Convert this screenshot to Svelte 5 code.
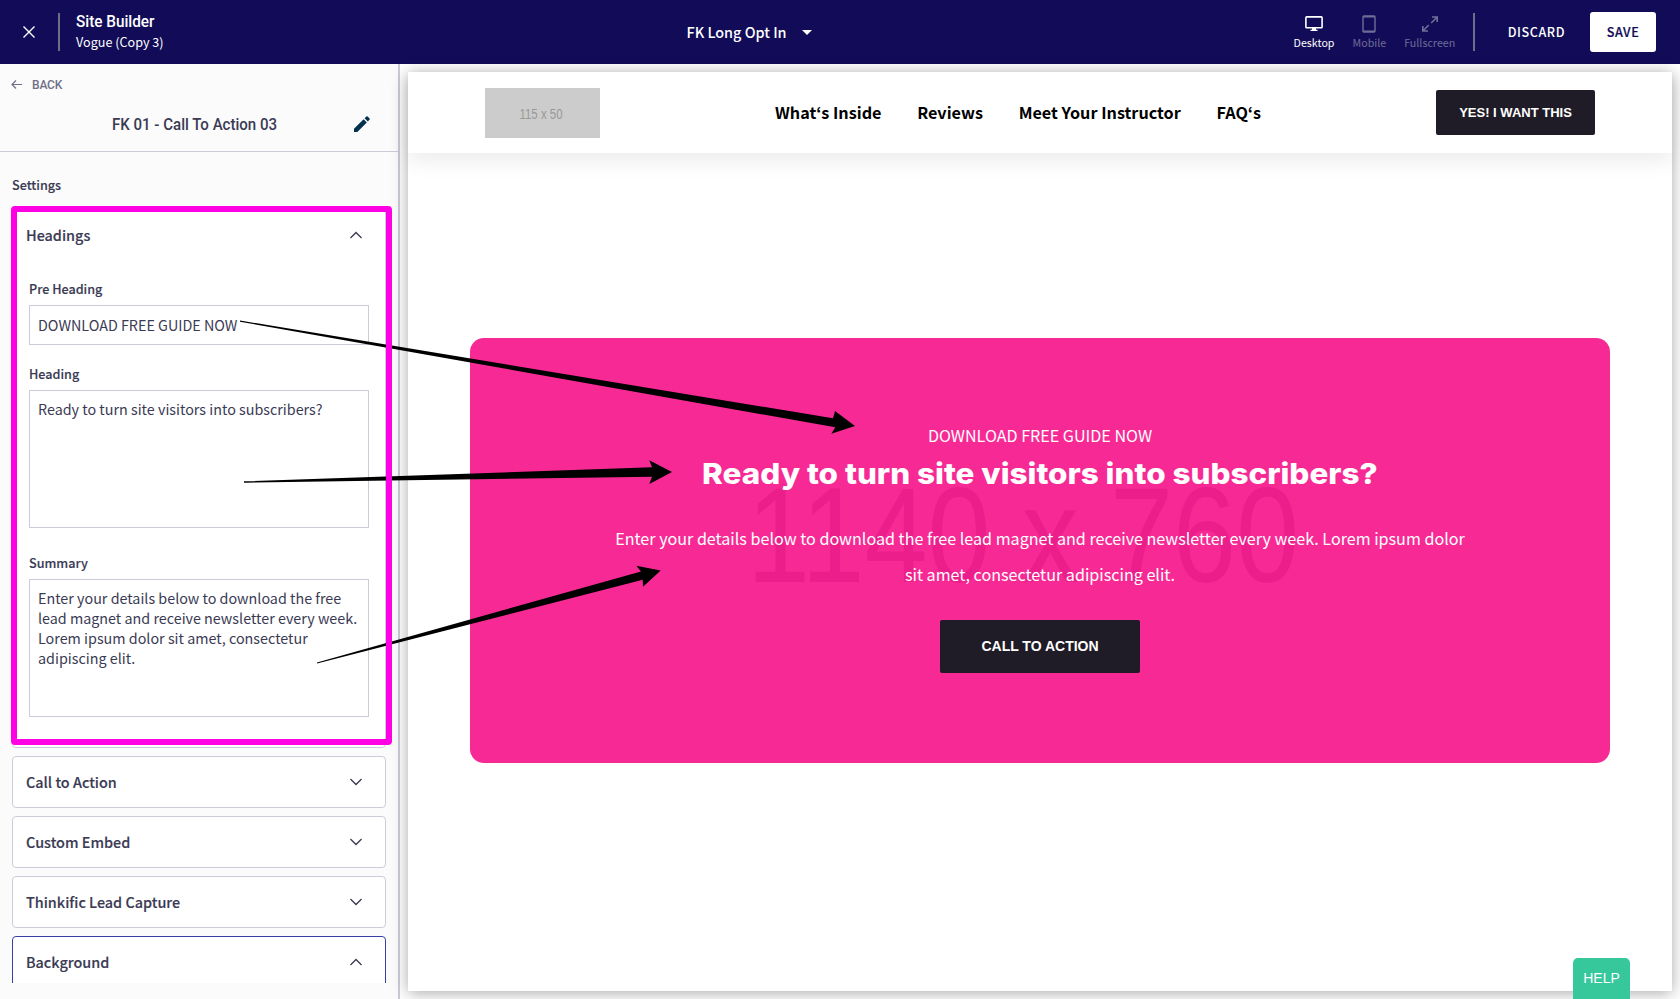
<script>
  const nav = ['What‘s Inside', 'Reviews', 'Meet Your Instructor', 'FAQ‘s'];
  const panels = [
    { title: 'Call to Action', open: false },
    { title: 'Custom Embed', open: false },
    { title: 'Thinkific Lead Capture', open: false },
    { title: 'Background', open: true }
  ];
</script>

{#snippet chevron(up)}
  <svg class="chevron" class:up viewBox="0 0 12 8" width="12" height="8">
    <path d="M.4 1l5.600 5.600L11.600 1" fill="none" stroke="#3a3a54" stroke-width="1.400" />
  </svg>
{/snippet}

<div class="app">
  <header class="topbar">
    <div class="left">
      <svg width="12" height="12" viewBox="0 0 12 12"><path d="M.5.5l11 11M11.500.5l-11 11" stroke="#fff" stroke-width="1.400" /></svg>
      <span class="rule"></span>
      <div class="titles">
        <div class="product">Site Builder</div>
        <div class="theme">Vogue (Copy 3)</div>
      </div>
    </div>
    <div class="page">
      <span>FK Long Opt In</span>
      <svg width="10" height="5" viewBox="0 0 10 5"><path d="M0 0h10L5 5z" fill="#fff" /></svg>
    </div>
    <div class="right">
      <div class="device active">
        <svg width="18" height="18" viewBox="0 0 18 18"><rect x=".9" y="1.900" width="16.200" height="10.800" rx=".8" fill="none" stroke="currentColor" stroke-width="1.600" /><path d="M7 13h4v1.700h1.500V16h-7v-1.300H7z" fill="currentColor" /></svg>
        <span>Desktop</span>
      </div>
      <div class="device">
        <svg width="18" height="18" viewBox="0 0 18 18"><rect x="3" y="1" width="12" height="16" rx="1" fill="none" stroke="currentColor" stroke-width="1.400" /><path d="M3 1.700h12M3 16.300h12" stroke="currentColor" stroke-width="1.400" /></svg>
        <span>Mobile</span>
      </div>
      <div class="device">
        <svg width="18" height="18" viewBox="0 0 18 18"><path d="M11 2h5.200v5M16.200 2l-6 6M1.800 11v5H7M1.800 16l6-6" fill="none" stroke="currentColor" stroke-width="1.600" /></svg>
        <span>Fullscreen</span>
      </div>
      <span class="rule"></span>
      <button class="discard">DISCARD</button>
      <button class="save">SAVE</button>
    </div>
  </header>

  <div class="body">
    <aside>
      <div class="head">
        <div class="back">
          <svg width="11" height="9" viewBox="0 0 11 9"><path d="M5 .5l-4 4 4 4M1 4.500h10" fill="none" stroke="#6f6f88" stroke-width="1.200" /></svg>
          <span>BACK</span>
        </div>
        <div class="section">
          <h1>FK 01 - Call To Action 03</h1>
          <svg class="pencil" width="16" height="16" viewBox="0 0 16 16"><path d="M0 12.700V16h3.300L12.800 6.400 9.600 3.200zM15.600 3.600a.9.9 0 0 0 0-1.200L13.600.4a.9.9 0 0 0-1.200 0l-1.800 1.800 3.200 3.200z" fill="#03304e" /></svg>
        </div>
      </div>
      <div class="settings">
        <div class="label">Settings</div>
        <div class="panel headings">
          <div class="panel-head"><span>Headings</span>{@render chevron(true)}</div>
          <div class="fields">
            <div class="field"><label for="pre">Pre Heading</label><div id="pre" class="input">DOWNLOAD FREE GUIDE NOW</div></div>
            <div class="field"><label for="hd">Heading</label><div id="hd" class="input area">Ready to turn site visitors into subscribers?</div></div>
            <div class="field last"><label for="sm">Summary</label><div id="sm" class="input area">Enter your details below to download the free<br />lead magnet and receive newsletter every week.<br />Lorem ipsum dolor sit amet, consectetur<br />adipiscing elit.</div></div>
          </div>
          <div class="highlight"></div>
        </div>
        {#each panels as p}
          <div class="panel" class:selected={p.open}>
            <div class="panel-head"><span>{p.title}</span>{@render chevron(p.open)}</div>
          </div>
        {/each}
      </div>
    </aside>

    <main>
      <div class="preview">
        <div class="site-head">
          <div class="logo"><svg width="115" height="50"><text x="34.500" y="31" textLength="43" lengthAdjust="spacingAndGlyphs">115 x 50</text></svg></div>
          <nav>{#each nav as n}<span>{n}</span>{/each}</nav>
          <button class="want">YES! I WANT THIS</button>
        </div>
        <div class="card">
          <svg class="mark" width="1140" height="425"><text x="277" y="243.500" textLength="552" lengthAdjust="spacingAndGlyphs">1140 x 760</text></svg>
          <div class="content">
            <div class="pre">DOWNLOAD FREE GUIDE NOW</div>
            <h2>Ready to turn site visitors into subscribers?</h2>
            <p>Enter your details below to download the free lead magnet and receive newsletter every week. Lorem ipsum dolor<br />sit amet, consectetur adipiscing elit.</p>
            <button class="cta">CALL TO ACTION</button>
          </div>
        </div>
      </div>
    </main>
  </div>

  <svg class="arrows" width="1680" height="999" viewBox="0 0 1680 999">
    <path d="M240 320.500L833 418.300 835 411 855 426 831.300 433.700 835.300 427.300 240 321.700z" />
    <path d="M244 481.300L652 467.300 649.300 460.300 672 472 649.300 484 652 476.700 244 482.700z" />
    <path d="M317 662.500L641 571.400 636.300 565.700 660.700 570.500 643 586.700 642.700 579.800 317 663.600z" />
  </svg>
  <div class="help">HELP</div>
</div>

<style>
  :global(body) { margin: 0; }
  .app, .app * { box-sizing: border-box; }
  .app {
    position: relative; width: 1680px; height: 999px; overflow: hidden;
    display: flex; flex-direction: column; background: #fff;
    font-family: "Noto Sans CJK KR", "Noto Sans", sans-serif; color: #3a3a54;
  }
  svg { display: block; flex: none; }
  button { border: 0; padding: 0; margin: 0; font-family: inherit; background: none; white-space: nowrap; }
  .topbar {
    height: 64px; flex: none; background: #120c58; color: #fff;
    display: grid; grid-template-columns: 686.500px 1fr auto; align-items: center;
  }
  .left { display: flex; align-items: center; padding-left: 23px; }
  .rule { width: 2px; height: 38px; background: #706d89; }
  .left .rule { margin: 0 16px 0 23px; }
  .titles { white-space: nowrap; padding-bottom: 2px; }
  .product { font: 500 17px/22px Roboto, sans-serif; transform: scaleX(.9); transform-origin: left; }
  .theme { font-size: 12.600px; line-height: 20px; }
  .page { display: flex; align-items: center; gap: 15.500px; font-size: 14.400px; font-weight: 500; line-height: 24px; }
  .right { display: flex; align-items: center; padding-right: 24px; }
  .device { display: flex; flex-direction: column; align-items: center; color: #706d96; font-size: 10.700px; line-height: 18px; margin-right: 18px; padding-top: 2px; }
  .device span { margin-top: 1px; margin-bottom: -1px; }
  .device.active { color: #fff; }
  .device:nth-child(3) { margin-right: 17.500px; }
  .discard, .save { font-size: 12.600px; font-weight: 500; line-height: 20px; letter-spacing: .55px; color: #fff; }
  .discard { margin: 0 25px 0 33px; }
  .save { width: 66px; height: 40px; background: #fff; color: #120c58; border-radius: 3px; -webkit-text-stroke: .2px; }
  .body { flex: 1; display: flex; min-height: 0; }
  aside { width: 400px; flex: none; background: #fbfbfb; border-right: 2px solid #cccbd9; display: flex; flex-direction: column; padding-bottom: 16px; }
  .head { height: 88px; flex: none; border-bottom: 1px solid #cccbd9; }
  .back { display: flex; align-items: center; gap: 10px; padding: 11px 0 0 11px; font: 500 12px/19px Roboto, sans-serif; letter-spacing: -.2px; color: #6f6f88; }
  .back span { padding-top: 1px; }
  .back svg { margin-bottom: 1px; }
  .section { display: flex; align-items: center; padding: 17px 28px 0 112px; justify-content: space-between; }
  h1 { margin: 0; width: 200px; font: 500 17px/24px Roboto, sans-serif; transform: scaleX(.885); transform-origin: left; white-space: nowrap; }
  .settings { flex: 1; min-height: 0; overflow: hidden; padding: 23px 12px 0; display: flex; flex-direction: column; gap: 8px; }
  .label, .panel-head, .field label { -webkit-text-stroke: .15px; }
  .label { font-size: 12.600px; font-weight: 500; line-height: 20px; margin-bottom: 4px; }
  .panel { position: relative; flex: none; background: #fff; border: 1px solid #cccbd9; border-radius: 4px; height: 52px; }
  .panel.selected { border-color: #3a3fa5; }
  .panel.headings { height: 541px; padding-top: 2px; }
  .panel-head { height: 50px; display: flex; align-items: center; justify-content: space-between; padding: 0 23px 0 13px; font-size: 14.400px; font-weight: 500; line-height: 24px; }
  .up { transform: rotate(180deg); }
  .fields { padding: 19px 16px 0; display: flex; flex-direction: column; gap: 19px; }
  .field label { display: block; font-size: 12.600px; font-weight: 500; line-height: 20px; margin-bottom: 6px; }
  .field.last { margin-top: 6px; }
  .input { height: 40px; border: 1px solid #cccbd9; padding: 9px 8px; font-size: 14.330px; line-height: 20px; white-space: nowrap; background: #fff; }
  .area { height: 138px; padding-top: 8px; }
  .highlight { position: absolute; left: -2px; top: -2px; width: 381px; height: 539px; border: 6px solid #ff00e4; border-radius: 4px; z-index: 1; }
  main { flex: 1; min-width: 0; padding: 8px; background: #fff; }
  .preview { height: 919px; background: #fff; box-shadow: 0 2px 15px rgba(0, 0, 0, .34); }
  .site-head { height: 81px; padding: 0 77px; display: flex; align-items: center; box-shadow: 0 8px 20px rgba(0, 0, 0, .08); }
  .logo { width: 115px; height: 50px; background: #ccc; }
  .logo text { font: 14px "Liberation Sans", sans-serif; fill: #999; }
  nav { display: flex; gap: 35.700px; margin: -2px 0 0 175px; color: #000; font-size: 16.200px; font-weight: 700; line-height: 26px; white-space: nowrap; }
  .want, .cta { background: #1f1c27; color: #fff; border-radius: 2px; font: 700 13px/20px "Liberation Sans", sans-serif; }
  .want { width: 159px; height: 45px; margin-left: auto; }
  .card { position: relative; width: 1140px; height: 425px; margin: 185px 0 0 62px; border-radius: 14px; background: #f72a95; color: #fff; }
  .mark { position: absolute; left: 0; top: 0; }
  .mark text { font: 136px "Liberation Sans", sans-serif; fill: #eb1e8b; }
  .content { position: relative; display: flex; flex-direction: column; align-items: center; padding-top: 85px; white-space: nowrap; text-align: center; }
  .pre { font-size: 16.120px; line-height: 25px; }
  h2 { margin: 7px 0 0; font: 800 29px/38px Inter, sans-serif; transform: scaleX(1.083); }
  p { margin: 27px 0 0; font-size: 16.120px; line-height: 36px; }
  .cta { width: 200px; height: 53px; margin-top: 28px; font-size: 14px; padding-bottom: 2px; }
  .arrows { position: absolute; left: 0; top: 0; pointer-events: none; }
  .help { position: absolute; left: 1573px; top: 958px; width: 57px; height: 41px; border-radius: 5px 5px 0 0; background: #36c79b; color: #fff; font: 14px/40px "Liberation Sans", sans-serif; text-align: center; }
</style>
